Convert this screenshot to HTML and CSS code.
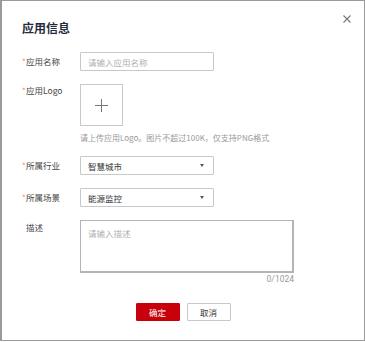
FILE: index.html
```html
<!DOCTYPE html>
<html lang="zh">
<head>
<meta charset="utf-8">
<link rel="stylesheet" href="styles.css">
</head>
<body>
<div class="dialog">
  <div class="close" aria-label="关闭">
    <svg width="8" height="8" viewBox="0 0 8 8"><path d="M0.5 0.5L7.5 7.5M7.5 0.5L0.5 7.5" stroke="#777" stroke-width="1.1" fill="none"/></svg>
  </div>
  <h1 class="title">应用信息</h1>
  <div class="form">
    <div class="row row-name">
      <label class="label"><span class="star">*</span>应用名称</label>
      <div class="field input"><span class="ph">请输入应用名称</span></div>
    </div>
    <div class="row row-logo">
      <label class="label"><span class="star">*</span>应用Logo</label>
      <div class="logo-col">
        <div class="upload">
          <svg width="13" height="13" viewBox="0 0 13 13"><path d="M6.5 0V13M0 6.5H13" stroke="#777" stroke-width="1" fill="none"/></svg>
        </div>
        <div class="hint">请上传应用Logo。图片不超过100K，仅支持PNG格式</div>
      </div>
    </div>
    <div class="row row-sel1">
      <label class="label"><span class="star">*</span>所属行业</label>
      <div class="field select"><span class="val">智慧城市</span><span class="arrow"></span></div>
    </div>
    <div class="row row-sel2">
      <label class="label"><span class="star">*</span>所属场景</label>
      <div class="field select"><span class="val">能源监控</span><span class="arrow"></span></div>
    </div>
    <div class="row row-desc">
      <label class="label"><span class="star blank"></span>描述</label>
      <div class="desc-col">
        <div class="textarea"><span class="ph">请输入描述</span></div>
        <div class="counter">0/1024</div>
      </div>
    </div>
  </div>
  <div class="actions">
    <button class="btn primary">确定</button>
    <button class="btn">取消</button>
  </div>
</div>
</body>
</html>
```

FILE: styles.css
```css
* { box-sizing: border-box; }
html, body { margin: 0; padding: 0; background: #fff; }
body {
  font-family: "Noto Sans CJK SC", "Noto Sans", sans-serif;
  color: #333;
}
.dialog {
  position: relative;
  width: 365px;
  height: 341px;
  border: 1px solid #9a9a9a;
  border-left-width: 2px;
  padding: 19px 0 0 20px;
}
.close {
  position: absolute;
  top: 14px;
  right: 13px;
  width: 8px;
  height: 8px;
  line-height: 0;
}
.title {
  margin: 0;
  font-size: 12px;
  line-height: 16px;
  height: 16px;
  font-weight: 700;
  color: #252b3a;
}
.form {
  margin-top: 16px;
}
.row {
  display: flex;
  align-items: flex-start;
}
.label {
  width: 58px;
  flex: none;
  font-size: 8.5px;
  line-height: 19px;
  color: #444;
  white-space: nowrap;
}
.star {
  display: inline-block;
  width: 4px;
  color: #f08a3c;
  font-size: 8px;
}
.field {
  width: 134px;
  height: 19px;
  border: 1px solid #c8c8c8;
  border-radius: 1px;
  padding: 0 7px;
  display: flex;
  align-items: center;
  font-size: 8.5px;
}
.ph { color: #b0b0b0; font-size: 8.5px; }
.val { color: #333; flex: 1; }
.arrow {
  width: 0;
  height: 0;
  border-left: 2.5px solid transparent;
  border-right: 2.5px solid transparent;
  border-top: 3px solid #555;
  margin-right: 2px;
}
.row-logo { margin-top: 13px; }
.row-logo .label { line-height: 12px; }
.upload {
  width: 43px;
  height: 42px;
  border: 1px solid #c8c8c8;
  display: flex;
  align-items: center;
  justify-content: center;
}
.hint {
  margin-top: 6px;
  font-size: 8px;
  line-height: 12px;
  color: #999;
  white-space: nowrap;
}
.row-sel1 { margin-top: 12px; }
.row-sel2 { margin-top: 13px; }
.row-desc { margin-top: 13px; }
.row-desc .label { line-height: 14px; }
.textarea {
  width: 214px;
  height: 53px;
  border: 1px solid #b4b4b4;
  border-right-width: 2px;
  border-bottom-width: 2px;
  padding: 3px 7px;
  line-height: 12px;
}
.counter {
  text-align: right;
  font-size: 8.5px;
  line-height: 12px;
  color: #999;
  font-family: "Roboto", "Noto Sans", sans-serif;
}
.actions {
  display: flex;
  justify-content: center;
  gap: 7px;
  margin-top: 18px;
  margin-left: -20px;
}
.btn {
  width: 44px;
  height: 18px;
  padding: 0;
  border: 1px solid #c8c8c8;
  background: #fff;
  color: #333;
  font-family: "Noto Sans CJK SC", sans-serif;
  font-size: 8.5px;
  border-radius: 1px;
}
.btn.primary {
  background: #c7000b;
  border-color: #c7000b;
  color: #fff;
}
```
